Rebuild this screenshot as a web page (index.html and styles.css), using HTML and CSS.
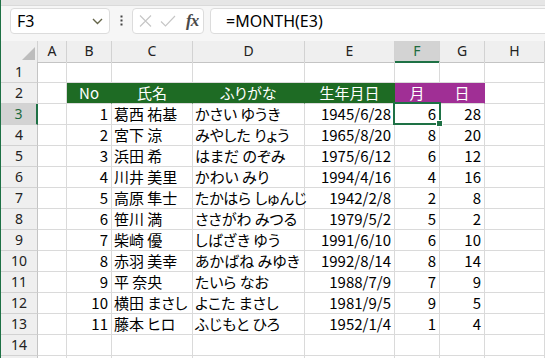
FILE: index.html
```html
<!DOCTYPE html>
<html lang="ja">
<head>
  <meta charset="UTF-8">
  <meta name="viewport" content="width=device-width, initial-scale=1.0">
  <title>MONTH</title>
  <link rel="stylesheet" href="styles.css">
</head>
<body>
  <div class="window">
    <div class="strip"></div>
    <div class="bar">
      <div class="name-box">
        <span>F3</span>
        <svg class="chev" width="11" height="7" viewBox="0 0 11 7"><polyline points="1,1 5.5,5.5 10,1" fill="none" stroke="#65654a" stroke-width="1.4"/></svg>
      </div>
      <div class="dots">
        <svg width="3" height="12" viewBox="0 0 3 12"><rect x="0.5" y="0.5" width="2" height="2" fill="#444"/><rect x="0.5" y="4.5" width="2" height="2" fill="#444"/><rect x="0.5" y="8.5" width="2" height="2" fill="#444"/></svg>
      </div>
      <div class="fx-box">
        <svg class="ico-x" width="13" height="12" viewBox="0 0 13 12"><path d="M1 0.5 L12 11.5 M12 0.5 L1 11.5" stroke="#c6c6c6" stroke-width="1.1" fill="none"/></svg>
        <svg class="ico-ok" width="16" height="12" viewBox="0 0 16 12"><path d="M1 6.5 L5.5 11 L15 1" stroke="#c6c6c6" stroke-width="1.1" fill="none"/></svg>
        <span class="fx">fx</span>
      </div>
      <div class="formula">=MONTH(E3)</div>
    </div>

    <div class="sheet">
      <div class="row head">
        <div class="corner"><svg width="13" height="13" viewBox="0 0 13 13"><polygon points="13,0 13,13 0,13" fill="#bdbdbd"/></svg></div>
        <div class="ch">A</div><div class="ch">B</div><div class="ch">C</div><div class="ch">D</div>
        <div class="ch">E</div><div class="ch on">F</div><div class="ch">G</div><div class="ch">H</div>
      </div>
      <div class="row">
        <div class="rh">1</div>
        <div class="c"></div><div class="c"></div><div class="c"></div><div class="c"></div>
        <div class="c"></div><div class="c"></div><div class="c"></div><div class="c"></div>
      </div>
      <div class="row">
        <div class="rh">2</div>
        <div class="c"></div>
        <div class="c green">No</div>
        <div class="c green">氏名</div>
        <div class="c green">ふりがな</div>
        <div class="c green">生年月日</div>
        <div class="c purple">月</div>
        <div class="c purple">日</div>
        <div class="c"></div>
      </div>
      <div class="row">
        <div class="rh on">3</div>
        <div class="c"></div><div class="c num">1</div><div class="c">葛西 祐基</div><div class="c">かさい ゆうき</div>
        <div class="c num">1945/6/28</div><div class="c num cur">6<span class="sel"><span class="handle"></span></span></div><div class="c num">28</div><div class="c"></div>
      </div>
      <div class="row">
        <div class="rh">4</div>
        <div class="c"></div><div class="c num">2</div><div class="c">宮下 涼</div><div class="c">みやした りょう</div>
        <div class="c num">1965/8/20</div><div class="c num">8</div><div class="c num">20</div><div class="c"></div>
      </div>
      <div class="row">
        <div class="rh">5</div>
        <div class="c"></div><div class="c num">3</div><div class="c">浜田 希</div><div class="c">はまだ のぞみ</div>
        <div class="c num">1975/6/12</div><div class="c num">6</div><div class="c num">12</div><div class="c"></div>
      </div>
      <div class="row">
        <div class="rh">6</div>
        <div class="c"></div><div class="c num">4</div><div class="c">川井 美里</div><div class="c">かわい みり</div>
        <div class="c num">1994/4/16</div><div class="c num">4</div><div class="c num">16</div><div class="c"></div>
      </div>
      <div class="row">
        <div class="rh">7</div>
        <div class="c"></div><div class="c num">5</div><div class="c">高原 隼士</div><div class="c">たかはら しゅんじ</div>
        <div class="c num">1942/2/8</div><div class="c num">2</div><div class="c num">8</div><div class="c"></div>
      </div>
      <div class="row">
        <div class="rh">8</div>
        <div class="c"></div><div class="c num">6</div><div class="c">笹川 満</div><div class="c">ささがわ みつる</div>
        <div class="c num">1979/5/2</div><div class="c num">5</div><div class="c num">2</div><div class="c"></div>
      </div>
      <div class="row">
        <div class="rh">9</div>
        <div class="c"></div><div class="c num">7</div><div class="c">柴崎 優</div><div class="c">しばざき ゆう</div>
        <div class="c num">1991/6/10</div><div class="c num">6</div><div class="c num">10</div><div class="c"></div>
      </div>
      <div class="row">
        <div class="rh">10</div>
        <div class="c"></div><div class="c num">8</div><div class="c">赤羽 美幸</div><div class="c">あかばね みゆき</div>
        <div class="c num">1992/8/14</div><div class="c num">8</div><div class="c num">14</div><div class="c"></div>
      </div>
      <div class="row">
        <div class="rh">11</div>
        <div class="c"></div><div class="c num">9</div><div class="c">平 奈央</div><div class="c">たいら なお</div>
        <div class="c num">1988/7/9</div><div class="c num">7</div><div class="c num">9</div><div class="c"></div>
      </div>
      <div class="row">
        <div class="rh">12</div>
        <div class="c"></div><div class="c num">10</div><div class="c">横田 まさし</div><div class="c">よこた まさし</div>
        <div class="c num">1981/9/5</div><div class="c num">9</div><div class="c num">5</div><div class="c"></div>
      </div>
      <div class="row">
        <div class="rh">13</div>
        <div class="c"></div><div class="c num">11</div><div class="c">藤本 ヒロ</div><div class="c">ふじもと ひろ</div>
        <div class="c num">1952/1/4</div><div class="c num">1</div><div class="c num">4</div><div class="c"></div>
      </div>
      <div class="row">
        <div class="rh">14</div>
        <div class="c"></div><div class="c"></div><div class="c"></div><div class="c"></div>
        <div class="c"></div><div class="c"></div><div class="c"></div><div class="c"></div>
      </div>
      <div class="row">
        <div class="rh"></div>
        <div class="c"></div><div class="c"></div><div class="c"></div><div class="c"></div>
        <div class="c"></div><div class="c"></div><div class="c"></div><div class="c"></div>
      </div>
    </div>
  </div>
</body>
</html>
```

FILE: styles.css
```css
html, body {
  margin: 0;
  height: 100%;
  overflow: hidden;
}
body {
  font-family: "Noto Sans", "Noto Sans CJK JP", sans-serif;
  background-color: #fff;
  color: #000;
}
.window {
  border-left: 1px solid #1e7145;
  height: 100%;
  overflow: hidden;
}
.strip {
  height: 5px;
  background-color: #e6e6e6;
  border-bottom: 1px solid #dadada;
}
.bar {
  display: flex;
  align-items: flex-start;
  height: 35px;
  box-sizing: border-box;
  padding: 2px 0 0 9px;
  background-color: #f6f6f6;
}
.name-box, .fx-box, .formula {
  box-sizing: border-box;
  height: 26px;
  background-color: #fff;
  border: 1px solid #dcdcdc;
  border-radius: 4px;
}
.name-box {
  width: 100px;
  display: flex;
  align-items: center;
  justify-content: space-between;
  padding: 0 6px 0 6px;
  font-size: 16px;
}
.chev {
  margin-top: 1px;
}
.dots {
  width: 22px;
  height: 26px;
  display: flex;
  align-items: center;
  justify-content: center;
}
.fx-box {
  width: 72px;
  display: flex;
  align-items: center;
  padding-left: 6px;
}
.ico-ok {
  margin-left: 8px;
}
.fx {
  margin-left: 10px;
  font-family: "Liberation Serif", serif;
  font-style: italic;
  font-weight: bold;
  font-size: 17px;
  color: #4a4a4a;
  letter-spacing: -1px;
}
.formula {
  flex: 1;
  margin-left: 6px;
  margin-right: -8px;
  padding-left: 15px;
  font-size: 16px;
  line-height: 24px;
}
.row {
  display: grid;
  grid-template-columns: 37px 29px 45px 81px 112px 90px 45px 45px 1fr;
  height: 21px;
}
.row > div {
  box-sizing: border-box;
  border-right: 1px solid #dadada;
  border-bottom: 1px solid #dadada;
  white-space: nowrap;
}
.head > div, .rh {
  background-color: #efefef;
  font-size: 14px;
  color: #222;
  text-align: center;
  line-height: 20px;
}
.head > div {
  border-right-color: #d2d2d2;
  border-bottom-color: #c4c4c4;
}
.corner {
  display: flex;
  align-items: flex-end;
  justify-content: flex-end;
  padding: 0 2px 2px 0;
}
.corner svg {
  display: block;
}
.rh {
  border-right-color: #c4c4c4 !important;
  border-bottom-color: #d2d2d2 !important;
}
.head > .on {
  background-color: #d3d3d3;
  color: #1e6b3e;
  border-bottom: 2px solid #1e7145;
}
.rh.on {
  background-color: #d3d3d3;
  color: #1e6b3e;
  border-right: 2px solid #1e7145 !important;
}
.c {
  font-family: "Noto Sans CJK JP", sans-serif;
  font-feature-settings: "palt";
  font-size: 15px;
  line-height: 19px;
  padding: 0 2px;
}
.num {
  text-align: right;
  padding-right: 3px;
}
.green, .purple {
  color: #fff;
  text-align: center;
}
.green {
  background-color: #1e6b24;
  border-right-color: #1e6b24 !important;
}
.purple {
  background-color: #a02f95;
  border-right-color: #a02f95 !important;
}
.cur {
  position: relative;
}
.sel {
  position: absolute;
  left: -2px;
  top: -2px;
  right: -2px;
  bottom: -1px;
  border: 2px solid #1e7145;
}
.handle {
  position: absolute;
  right: -4px;
  bottom: -4px;
  width: 5px;
  height: 5px;
  background-color: #1e7145;
  border: 1px solid #fff;
}
```
